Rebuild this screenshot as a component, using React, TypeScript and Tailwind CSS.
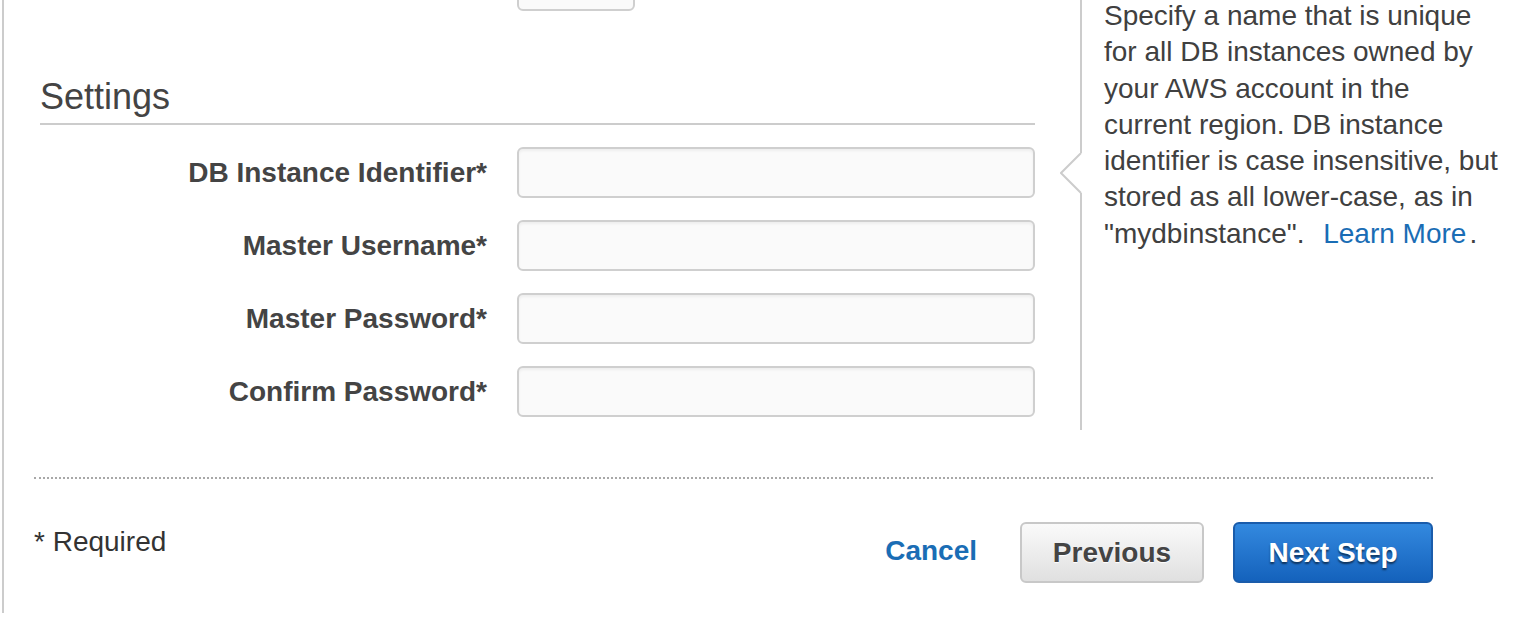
import React from 'react';

const fields = ['DB Instance Identifier*', 'Master Username*', 'Master Password*', 'Confirm Password*'];

function Field({ label }: { label: string }) {
    return (
        <div className="flex h-[51px] items-center gap-[30px]">
            <label className="w-[447px] text-right text-[28px] font-bold leading-[36px] text-[#444]">{label}</label>
            <input
                type="text"
                className="h-[51px] w-[518px] rounded-[6px] border-2 border-[#cfcfcf] bg-[#fafafa] shadow-[inset_0_2px_3px_rgba(0,0,0,0.05)] outline-none"
            />
        </div>
    );
}

function HelpPanel() {
    return (
        <div className="relative flex-1 border-l-2 border-[#cccccc] pl-[22px] pt-[38px]">
            <svg className="absolute left-[-22px] top-[193px]" width="23" height="42" viewBox="0 0 23 42">
                <polygon points="23,0 21,0 1,20 21,40 23,40" fill="#ffffff" />
                <polyline points="21,0 1,20 21,40" fill="none" stroke="#cccccc" strokeWidth="2" />
            </svg>
            <p className="whitespace-nowrap text-[28px] leading-[36.3px] text-[#404040]">
                Specify a name that is unique
                <br />
                for all DB instances owned by
                <br />
                your AWS account in the
                <br />
                current region. DB instance
                <br />
                identifier is case insensitive, but
                <br />
                stored as all lower-case, as in
                <br />
                "mydbinstance".{' '}
                <a href="#" className="ml-[11px] mr-[3px] text-[#1a6db5]">
                    Learn More
                </a>
                .
            </p>
        </div>
    );
}

export default function App() {
    return (
        <div className="h-[632px] w-[1520px] overflow-hidden bg-white font-['Liberation_Sans',Arial,sans-serif]">
            <div className="ml-[2px] border-l-2 border-[#cccccc] pb-[30px]">
                {/* form + help */}
                <div className="-mt-[40px] flex">
                    <div className="w-[1031px] pb-[13px] pl-[36px]">
                        <div className="flex gap-[30px]">
                            <div className="w-[447px]" />
                            <div className="h-[51px] w-[118px] rounded-[6px] border-2 border-[#cfcfcf] bg-[#fafafa]" />
                        </div>

                        <h2 className="mt-[66px] border-b-2 border-[#cccccc] pb-[6px] text-[36px] font-normal leading-[40px] text-[#444]">
                            Settings
                        </h2>

                        <div className="mt-[22px] flex flex-col gap-[22px]">
                            {fields.map((f) => (
                                <Field key={f} label={f} />
                            ))}
                        </div>
                    </div>
                    <div className="w-[45px]" />
                    <HelpPanel />
                </div>

                {/* footer */}
                <div className="ml-[30px] mr-[87px] mt-[47px] border-t-2 border-dotted border-[#a8a8a8] pt-[43px]">
                    <div className="flex items-start justify-between">
                        <p className="mt-[2px] text-[28px] leading-[36px] text-[#333]">* Required</p>
                        <div className="flex items-center">
                            <a href="#" className="mt-[-4px] text-[28px] font-bold leading-[36px] text-[#1a6db5]">
                                Cancel
                            </a>
                            <button className="ml-[43px] h-[61px] w-[184px] rounded-[6px] border-2 border-[#c8c8c8] bg-gradient-to-b from-[#fafafa] to-[#e0e0e0] text-[28px] font-bold text-[#444] [text-shadow:0_1px_1px_#ffffff]">
                                Previous
                            </button>
                            <button className="ml-[29px] h-[61px] w-[200px] rounded-[6px] border-2 border-[#1a5cab] bg-gradient-to-b from-[#3389df] to-[#1462bc] text-[28px] font-bold text-white [text-shadow:0_2px_2px_rgba(0,0,0,0.55)]">
                                Next Step
                            </button>
                        </div>
                    </div>
                </div>
            </div>
        </div>
    );
}
